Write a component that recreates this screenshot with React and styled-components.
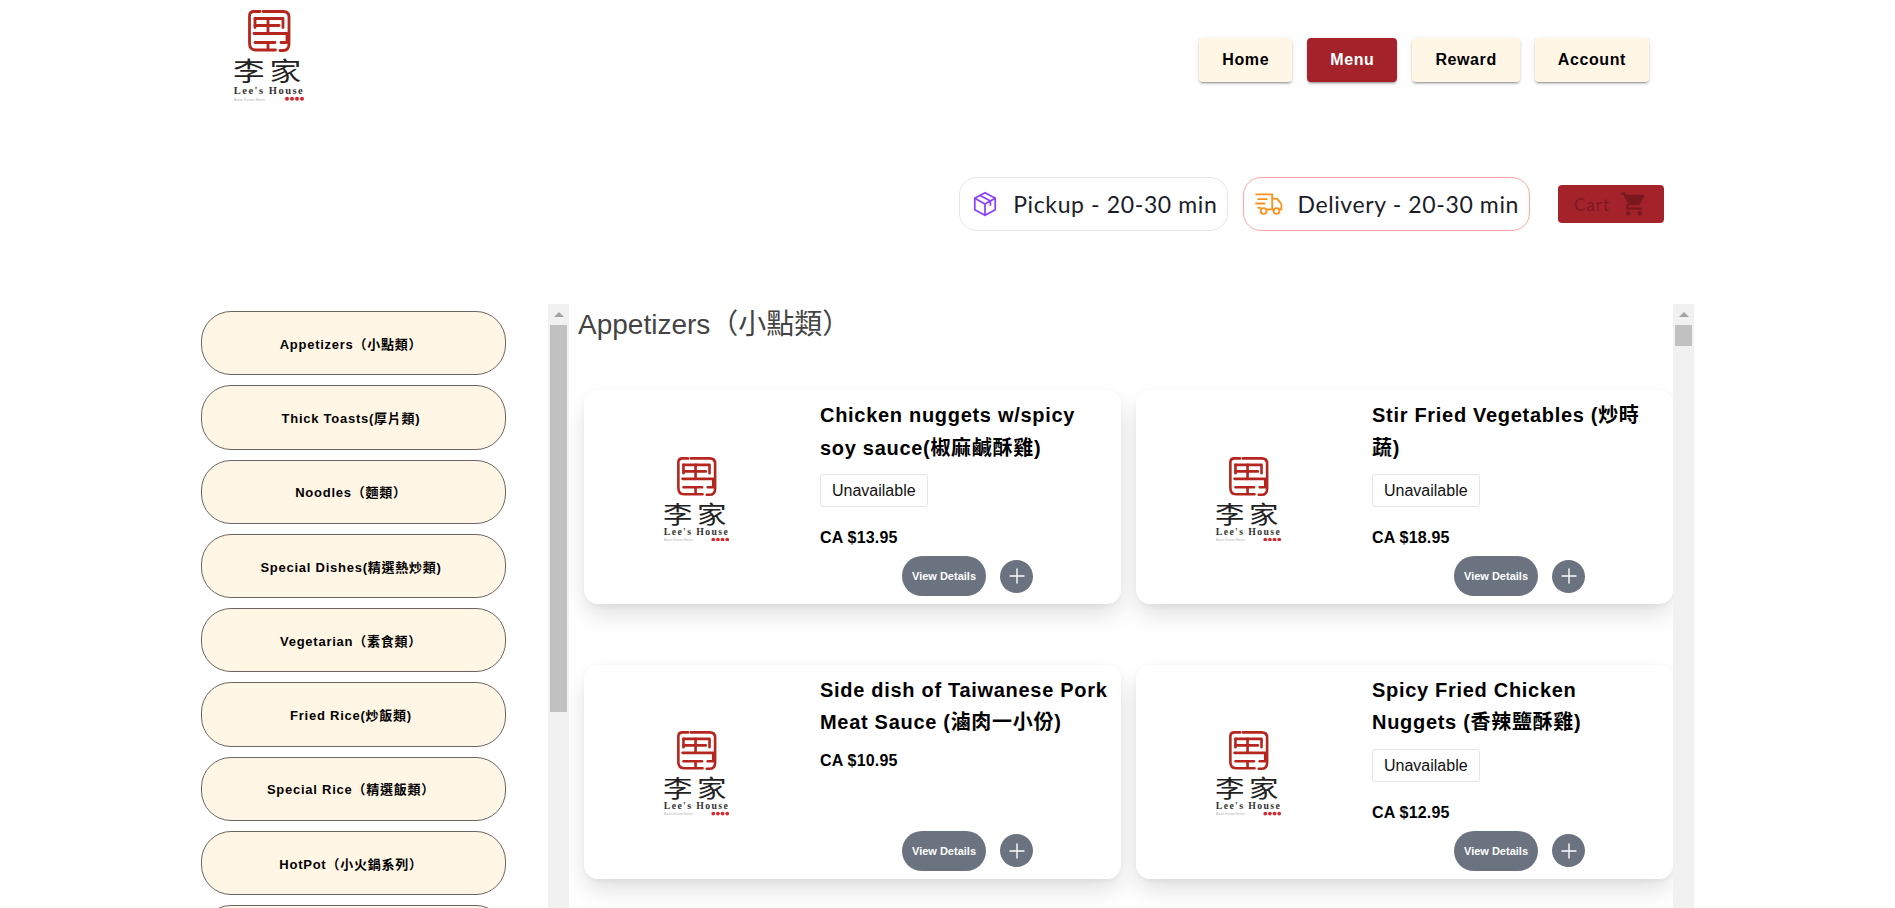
import React from "react";
import styled, { createGlobalStyle } from "styled-components";
import { MdShoppingCart } from "react-icons/md";
import { Plus } from "lucide-react";

const sansStack = `"Liberation Sans", "Noto Sans CJK TC", sans-serif`;
const roundStack = `"Lato", "Noto Sans", sans-serif`;

const GlobalStyle = createGlobalStyle`
  html, body {
    margin: 0;
    height: 100%;
    overflow: hidden;
    background: #ffffff;
    font-family: ${sansStack};
  }
  * {
    box-sizing: border-box;
  }
`;

const categories = [
  "Appetizers（小點類）",
  "Thick Toasts(厚片類)",
  "Noodles（麵類）",
  "Special Dishes(精選熱炒類)",
  "Vegetarian（素食類）",
  "Fried Rice(炒飯類)",
  "Special Rice（精選飯類）",
  "HotPot（小火鍋系列）",
  "",
];

const dishes = [
  { name: "Chicken nuggets w/spicy soy sauce(椒麻鹹酥雞)", price: "CA $13.95", unavailable: true },
  { name: "Stir Fried Vegetables (炒時蔬)", price: "CA $18.95", unavailable: true },
  { name: "Side dish of Taiwanese Pork Meat Sauce (滷肉一小份)", price: "CA $10.95", unavailable: false },
  { name: "Spicy Fried Chicken Nuggets (香辣鹽酥雞)", price: "CA $12.95", unavailable: true },
];

const navItems = ["Home", "Menu", "Reward", "Account"];

const Logo = ({ width }) => (
  <LogoSvg width={width} viewBox="0 0 72 91">
    <g fill="none" stroke="#b5261e" strokeWidth="2.8" strokeLinecap="round" strokeLinejoin="round">
      <path d="M27 1.5h-6q-4.500 0-4.500 4.500v27q0 7 6 7h20" />
      <path d="M30 1.500h20q6 0 6 5.500v27q0 6.500-6 6.500h-3" />
      <path d="M22 8.500h28v9" />
      <path d="M22 15.500h24" />
      <path d="M22 8.500v9" />
      <path d="M35 8.500v15" />
      <path d="M21 23.500h33v9h-6" />
      <path d="M22 32.500h20M35 32.500v7" />
    </g>
    <text
      x="0"
      y="71"
      fontSize="26"
      letterSpacing="4"
      transform="scale(1.22 1)"
      fontFamily={`"Noto Sans CJK TC", sans-serif`}
      fill="#222222"
    >
      李家
    </text>
    <text x="36" y="84" textAnchor="middle" fontSize="10.500" fontWeight="700" letterSpacing="1.500" fontFamily={`"Liberation Serif", serif`} fill="#333333">
      Lee's House
    </text>
    <text x="1" y="90.500" fontSize="3.600" fontFamily={`"Liberation Sans", sans-serif`} fill="#b5b5b5">
      Asian Fusion Bistro
    </text>
    <g fill="#d8262c">
      <circle cx="54" cy="88.800" r="2" />
      <circle cx="59" cy="88.800" r="2" />
      <circle cx="64" cy="88.800" r="2" />
      <circle cx="69" cy="88.800" r="2" />
    </g>
  </LogoSvg>
);

const PackageIcon = () => (
  <svg width="28" height="28" viewBox="0 0 26 26" fill="none" stroke="#8a3ffc" strokeWidth="1.600" strokeLinejoin="round" strokeLinecap="round">
    <path d="M13 2.500l9.500 5.200v10.600L13 23.500l-9.500-5.200V7.700z" />
    <path d="M3.500 7.700L13 13l9.500-5.300M13 13v10.500" />
    <path d="M8.500 5l9.500 5.300v3.700" />
  </svg>
);

const TruckIcon = () => (
  <svg width="28" height="24" viewBox="0 0 26 22" fill="none" stroke="#f7931e" strokeWidth="1.700" strokeLinejoin="round" strokeLinecap="round">
    <path d="M1 2h15v14h-5" />
    <path d="M16 6h4.500l4 5v5h-2" />
    <path d="M3 6.500h8M1 10.500h8M3 14.500h2" />
    <circle cx="8" cy="17.500" r="2.700" />
    <circle cx="20" cy="17.500" r="2.700" />
    <path d="M16 16h1.500" />
  </svg>
);

const App = () => {
  return (
    <Page>
      <GlobalStyle />
      <Header>
        <Logo width={72} />
        <Nav>
          {navItems.map((item) => (
            <NavButton key={item} active={item === "Menu" ? 1 : 0}>
              {item}
            </NavButton>
          ))}
        </Nav>
      </Header>

      <OrderBar>
        <ModePill>
          <PackageIcon />
          <ModeText>Pickup - 20-30 min</ModeText>
        </ModePill>
        <ModePill selected={1}>
          <TruckIcon />
          <ModeText>Delivery - 20-30 min</ModeText>
        </ModePill>
        <CartButton disabled>
          Cart
          <MdShoppingCart size={28} />
        </CartButton>
      </OrderBar>

      <Content>
        <Sidebar>
          <CategoryList>
            {categories.map((category, index) => (
              <CategoryButton key={index}>{category}</CategoryButton>
            ))}
          </CategoryList>
          <ScrollTrack>
            <ScrollArrow />
            <ScrollThumb length={387} />
          </ScrollTrack>
        </Sidebar>

        <MenuPanel>
          <MenuInner>
            <SectionTitle>Appetizers（小點類）</SectionTitle>
            <DishGrid>
              {dishes.map((dish) => (
                <DishCard key={dish.name}>
                  <DishImage>
                    <Logo width={67} />
                  </DishImage>
                  <DishBody>
                    <DishName>{dish.name}</DishName>
                    {dish.unavailable && <StatusTag>Unavailable</StatusTag>}
                    <DishPrice>{dish.price}</DishPrice>
                    <DishActions>
                      <DetailsButton>View Details</DetailsButton>
                      <AddButton>
                        <Plus size={24} strokeWidth={1.4} />
                      </AddButton>
                    </DishActions>
                  </DishBody>
                </DishCard>
              ))}
            </DishGrid>
          </MenuInner>
          <ScrollTrack>
            <ScrollArrow />
            <ScrollThumb length={21} />
          </ScrollTrack>
        </MenuPanel>
      </Content>
    </Page>
  );
};

export default App;

// style
const Page = styled.div`
  width: 1895px;
  height: 908px;
  overflow: hidden;
  background: #ffffff;
`;

const Header = styled.header`
  display: flex;
  justify-content: space-between;
  align-items: flex-start;
  height: 177px;
  padding: 10px 246px 0 233px;
`;

const LogoSvg = styled.svg`
  display: block;
  flex-shrink: 0;
`;

const Nav = styled.nav`
  display: flex;
  gap: 15px;
  margin-top: 28px;
`;

const NavButton = styled.button`
  height: 44px;
  padding: 0 23px;
  border: none;
  border-radius: 4px;
  background: ${(props) => (props.active ? "#a4222a" : "#fff6e5")};
  color: ${(props) => (props.active ? "#ffffff" : "#000000")};
  font-family: ${sansStack};
  font-size: 16px;
  font-weight: 700;
  letter-spacing: 0.6px;
  box-shadow: 0 3px 1px -2px rgba(0, 0, 0, 0.2), 0 2px 2px 0 rgba(0, 0, 0, 0.14),
    0 1px 5px 0 rgba(0, 0, 0, 0.12);
`;

const OrderBar = styled.div`
  display: flex;
  justify-content: flex-end;
  align-items: center;
  height: 54px;
  padding-right: 231px;
`;

const ModePill = styled.div`
  display: flex;
  align-items: center;
  gap: 14px;
  height: 54px;
  padding: 0 10px 0 11px;
  margin-right: 15px;
  border: 1px solid ${(props) => (props.selected ? "#ffa5a5" : "#e6e6e6")};
  border-radius: 18px;
  background: #ffffff;

  & + & {
    margin-right: 28px;
  }
`;

const ModeText = styled.span`
  font-family: ${roundStack};
  font-size: 23px;
  font-weight: 400;
  letter-spacing: 0.62px;
  color: #1c1c28;
  white-space: nowrap;
`;

const CartButton = styled.button`
  display: flex;
  align-items: center;
  justify-content: center;
  gap: 10px;
  width: 106px;
  height: 38px;
  border: none;
  border-radius: 4px;
  background: #a4222a;
  color: rgba(0, 0, 0, 0.26);
  font-family: ${roundStack};
  font-size: 17px;
  letter-spacing: 1px;
`;

const Content = styled.div`
  display: flex;
  height: 700px;
  margin-top: 73px;
  padding-left: 201px;
`;

const ScrollTrack = styled.div`
  display: flex;
  flex-direction: column;
  align-items: center;
  width: 21px;
  flex-shrink: 0;
  background: #f1f1f1;
`;

const ScrollArrow = styled.div`
  height: 21px;
  flex-shrink: 0;
  padding-top: 8px;

  &::before {
    content: "";
    display: block;
    width: 0;
    height: 0;
    border-left: 5px solid transparent;
    border-right: 5px solid transparent;
    border-bottom: 5px solid #a3a3a3;
  }
`;

const ScrollThumb = styled.div`
  width: 17px;
  height: ${(props) => props.length}px;
  flex-shrink: 0;
  background: #c1c1c1;
`;

const Sidebar = styled.aside`
  display: flex;
  justify-content: space-between;
  width: 368px;
  flex-shrink: 0;
`;

const CategoryList = styled.div`
  display: flex;
  flex-direction: column;
  gap: 10px;
  width: 305px;
  height: 100%;
  overflow: hidden;
  padding-top: 7px;
`;

const CategoryButton = styled.button`
  height: 64.3px;
  flex-shrink: 0;
  padding: 0 5px 0 0;
  border: 1px solid #6b6560;
  border-radius: 30px;
  background: #fff6e5;
  color: #000000;
  font-family: ${sansStack};
  font-size: 13px;
  font-weight: 700;
  letter-spacing: 0.75px;
`;

const MenuPanel = styled.main`
  display: flex;
  justify-content: space-between;
  width: 1125px;
  flex-shrink: 0;
`;

const MenuInner = styled.div`
  width: 1104px;
  overflow: hidden;
  padding: 0 0 0 9px;
`;

const SectionTitle = styled.h2`
  margin: 0;
  height: 86px;
  padding-top: 3px;
  font-size: 28px;
  line-height: 36px;
  font-weight: 400;
  color: #444444;
`;

const DishGrid = styled.div`
  display: grid;
  grid-template-columns: 537px 537px;
  column-gap: 15px;
  row-gap: 60.6px;
  padding-left: 6px;
  padding-bottom: 30px;
`;

const DishCard = styled.article`
  display: flex;
  gap: 11px;
  height: 214px;
  border-radius: 14px;
  background: #ffffff;
  box-shadow: 0 12px 24px -2px rgba(0, 0, 0, 0.13), 0 4px 6px -2px rgba(0, 0, 0, 0.04),
    0 0 8px rgba(0, 0, 0, 0.02);
`;

const DishImage = styled.div`
  display: flex;
  align-items: center;
  justify-content: center;
  width: 225px;
  flex-shrink: 0;
  padding: 4px 0 0;
`;

const DishBody = styled.div`
  display: flex;
  flex-direction: column;
  align-items: flex-start;
  width: 289px;
  padding: 9px 0 8px;
`;

const DishName = styled.h3`
  margin: 0;
  font-size: 20px;
  line-height: 32.5px;
  font-weight: 700;
  letter-spacing: 0.7px;
  color: #000000;
`;

const StatusTag = styled.span`
  margin: 10px 0 9px;
  height: 33px;
  padding: 0 11px;
  border: 1px solid #e5e5e5;
  border-radius: 3px;
  font-size: 16px;
  line-height: 31px;
  color: #111111;
`;

const DishPrice = styled.div`
  margin-top: 13px;
  font-size: 16px;
  line-height: 18px;
  font-weight: 700;
  letter-spacing: 0.2px;
  color: #000000;
`;

const DishActions = styled.div`
  display: flex;
  align-items: center;
  gap: 14px;
  margin-top: auto;
  margin-left: 82px;
`;

const DetailsButton = styled.button`
  width: 84px;
  height: 40px;
  padding: 0;
  border: none;
  border-radius: 20px;
  background: #6b7280;
  color: #ffffff;
  font-family: ${sansStack};
  font-size: 11px;
  font-weight: 700;
`;

const AddButton = styled.button`
  display: flex;
  align-items: center;
  justify-content: center;
  width: 33px;
  height: 33px;
  padding: 0;
  border: none;
  border-radius: 50%;
  background: #6b7280;
  color: #ffffff;
`;
